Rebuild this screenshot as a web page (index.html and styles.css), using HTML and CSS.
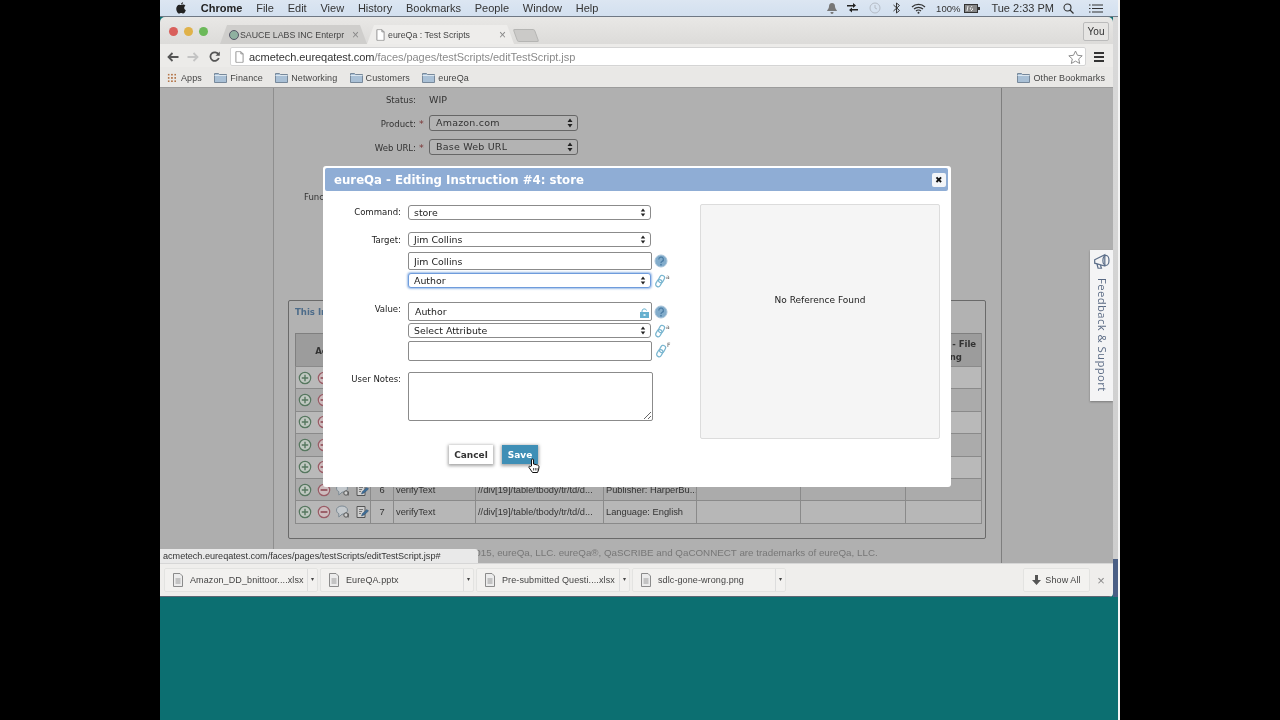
FILE: index.html
```html
<!DOCTYPE html>
<html lang="en">
<head>
    <meta charset="UTF-8">
    <title>eureQa : Test Scripts</title>
    <link rel="stylesheet" href="styles.css">
</head>
<body>
    <svg class="sprite" xmlns="http://www.w3.org/2000/svg">
        <symbol id="i-plus" viewBox="0 0 14 14"><circle cx="7" cy="7" r="5.7" fill="#c0c8c1" stroke="#56775f" stroke-width="1.2"/><path d="M7 3.800v6.400M3.800 7h6.400" stroke="#56775f" stroke-width="1.400"/></symbol>
        <symbol id="i-minus" viewBox="0 0 14 14"><circle cx="7" cy="7" r="5.7" fill="#cdbcbe" stroke="#9a5c66" stroke-width="1.200"/><path d="M3.600 7h6.800" stroke="#8a434e" stroke-width="1.500"/></symbol>
        <symbol id="i-bubble" viewBox="0 0 14 14"><path d="M6 1c3.200 0 5.500 1.700 5.500 4.100S9.200 9.200 6 9.200L2.800 12V8.600C1.300 8 .5 6.700.5 5.100.5 2.700 2.800 1 6 1z" fill="#c4c9cd" stroke="#7d8a94"/><circle cx="10" cy="10" r="2.200" fill="#d0d0d0" stroke="#555"/><path d="M12.200 8.500v4" stroke="#555"/></symbol>
        <symbol id="i-note" viewBox="0 0 14 14"><path d="M2 1.500h8v11H2z" fill="#cfcfcf" stroke="#555"/><path d="M4 4.500h4M4 6.500h3M4 8.500h2" stroke="#777"/><path d="M6.500 11l1-2.500 4.500-4 1.500 1.500-4.500 4z" fill="#3f6f99" stroke="#2d4f6e" stroke-width=".5"/></symbol>
        <symbol id="i-folder" viewBox="0 0 13 11"><path d="M.5 1.500h4l1 1h7v8H.5z" fill="#a9c0d6" stroke="#77889a"/><path d="M.5 3.500h12" stroke="#dbe6ef"/></symbol>
        <symbol id="i-doc" viewBox="0 0 10 13"><path d="M1 .5h5.500L9 3v9.500H1z" fill="#fff" stroke="#8a8a8a"/><path d="M6.500.5V3H9" fill="none" stroke="#8a8a8a"/></symbol>
        <symbol id="i-file" viewBox="0 0 12 14"><path d="M1.500.5h6.500l2.500 2.500v10.500h-9z" fill="#ececec" stroke="#8b8b8b"/><path d="M3.500 6h5M3.500 8h5M3.500 10h5" stroke="#9a9a9a"/></symbol>
        <symbol id="i-help" viewBox="0 0 14 14"><circle cx="7" cy="7" r="6" fill="#82accb" stroke="#a8c4da"/><path d="M4.800 5.400a2.300 2.200 0 1 1 3.400 1.900c-.8.500-1.200.9-1.200 1.700" fill="none" stroke="#4d7ea6" stroke-width="1.300"/><circle cx="7" cy="10.700" r=".9" fill="#4d7ea6"/></symbol>
        <symbol id="i-link" viewBox="0 0 12 14"><rect x="5" y="1" width="4.800" height="7.500" rx="2.400" transform="rotate(30 7 5)" fill="none" stroke="#7ab6d0" stroke-width="1.300"/><rect x="2.500" y="5.500" width="4.800" height="7.500" rx="2.400" transform="rotate(30 5 9)" fill="none" stroke="#7ab6d0" stroke-width="1.300"/></symbol>
        <symbol id="i-updown" viewBox="0 0 6 10"><path d="M3 .5L5.500 4H.5zM3 9.500L.5 6h5z" fill="#222"/></symbol>
    </svg>

    <div class="screen">
        <div class="menubar">
            <svg class="apple" viewBox="0 0 12 14"><path d="M8.500 0c.1 1.300-1.100 2.700-2.500 2.600C5.900 1.300 7.200.1 8.500 0zM6 3.500c.7 0 1.500-.6 2.700-.6 1 0 2 .5 2.600 1.400-2.200 1.300-1.800 4.400.5 5.300-.6 1.600-1.800 4-3.200 4-.9 0-1.200-.6-2.400-.6s-1.600.6-2.400.6C2.200 13.600.3 10.500.3 7.800.3 5 2 3 4 3c.9 0 1.400.5 2 .5z" fill="#222"/></svg>
            <span class="menu-app">Chrome</span>
            <span>File</span>
            <span>Edit</span>
            <span>View</span>
            <span>History</span>
            <span>Bookmarks</span>
            <span>People</span>
            <span>Window</span>
            <span>Help</span>
            <div class="menu-status">
                <svg width="10" height="11" viewBox="0 0 10 11"><path d="M5 0c2 0 3 1.500 3 3.500 0 2.500 2 3.500 2 4.500H0c0-1 2-2 2-4.500C2 1.500 3 0 5 0zM3.500 9h3C6.500 10 6 11 5 11S3.500 10 3.500 9z" fill="#777"/></svg>
                <svg class="ms-sync" width="13" height="12" viewBox="0 0 13 12"><path d="M1 3h6V1l3 2.500L7 6V4.500H1zM12 8.500H6v2L3 8l3-2.500V7h6z" fill="#222"/></svg>
                <svg class="ms-time" width="12" height="12" viewBox="0 0 12 12"><circle cx="6" cy="6" r="5" fill="none" stroke="#b5bcc6"/><path d="M6 3v3l2 1" fill="none" stroke="#b5bcc6"/></svg>
                <svg class="ms-bt" width="7" height="12" viewBox="0 0 7 12"><path d="M.5 3l6 5.500L3.500 11V1l3 2.500-6 5.500" fill="none" stroke="#333"/></svg>
                <svg class="ms-wifi" width="15" height="11" viewBox="0 0 15 11"><path d="M1 4c3.500-3.500 9.500-3.500 13 0M3 6c2.500-2.300 6.500-2.300 9 0M5 8c1.300-1.100 3.700-1.100 5 0" fill="none" stroke="#333" stroke-width="1.200"/><circle cx="7.500" cy="9.800" r="1" fill="#333"/></svg>
                <span class="ms-pct">100%</span>
                <svg class="ms-batt" width="16" height="9" viewBox="0 0 16 9"><rect x=".5" y=".5" width="13" height="8" fill="#888" stroke="#333"/><path d="M14 3h2v3h-2z" fill="#333"/><path d="M4 2L3 7M8 2l-2 3h3L7 7" stroke="#eee"/></svg>
                <span class="ms-time-text">Tue 2:33 PM</span>
                <svg class="ms-search" width="11" height="11" viewBox="0 0 11 11"><circle cx="4.500" cy="4.500" r="3.500" fill="none" stroke="#333" stroke-width="1.100"/><path d="M7 7l3.500 3.500" stroke="#333" stroke-width="1.300"/></svg>
                <svg class="ms-list" width="14" height="9" viewBox="0 0 14 9"><path d="M3 1h11M3 4.500h11M3 8h11" stroke="#333" stroke-width="1.200"/><path d="M0 1h1.500M0 4.500h1.500M0 8h1.500" stroke="#333" stroke-width="1.200"/></svg>
            </div>
        </div>

        <div class="desk">
            <div class="window">
                <div class="tabstrip">
                    <i class="light red"></i><i class="light amber"></i><i class="light green"></i>
                    <div class="tab tab-back">
                        <span class="fav"></span>
                        <span class="tab-title">SAUCE LABS INC Enterpr</span>
                        <span class="tab-x">×</span>
                    </div>
                    <div class="tab tab-active">
                        <svg class="tab-doc" viewBox="0 0 10 13"><use href="#i-doc"/></svg>
                        <span class="tab-title">eureQa : Test Scripts</span>
                        <span class="tab-x">×</span>
                    </div>
                    <div class="tab-new"></div>
                    <div class="you">You</div>
                </div>

                <div class="toolbar">
                    <svg class="nav" width="12" height="10" viewBox="0 0 12 10"><path d="M11.500 5H2M5.500 1L1.500 5l4 4" fill="none" stroke="#555" stroke-width="1.800"/></svg>
                    <svg class="nav nav-fwd" width="12" height="10" viewBox="0 0 12 10"><path d="M.5 5H10M6.500 1l4 4-4 4" fill="none" stroke="#c4c4c4" stroke-width="1.800"/></svg>
                    <svg class="nav nav-reload" width="11" height="11" viewBox="0 0 11 11"><path d="M9.500 3.500A4.300 4.300 0 1 0 9.800 7" fill="none" stroke="#555" stroke-width="1.800"/><path d="M10.800 .5v4.300H6.500z" fill="#555"/></svg>
                    <div class="omnibox">
                        <svg class="omni-doc" viewBox="0 0 10 13"><use href="#i-doc"/></svg>
                        <span class="url"><b>acmetech.eureqatest.com</b>/faces/pages/testScripts/editTestScript.jsp</span>
                        <svg class="star" width="15" height="14" viewBox="0 0 15 14"><path d="M7.500 1l2 4.300 4.700.5-3.500 3.100 1 4.600-4.200-2.400-4.200 2.400 1-4.600L.8 5.800l4.700-.5z" fill="#fff" stroke="#8d8d8d"/></svg>
                    </div>
                    <div class="burger"><i></i><i></i><i></i></div>
                </div>

                <div class="bookmarks">
                    <div class="bm bm-apps"><span class="apps-grid"></span>Apps</div>
                    <div class="bm"><svg class="bm-icon"><use href="#i-folder"/></svg>Finance</div>
                    <div class="bm"><svg class="bm-icon"><use href="#i-folder"/></svg>Networking</div>
                    <div class="bm"><svg class="bm-icon"><use href="#i-folder"/></svg>Customers</div>
                    <div class="bm"><svg class="bm-icon"><use href="#i-folder"/></svg>eureQa</div>
                    <div class="bm bm-other"><svg class="bm-icon"><use href="#i-folder"/></svg>Other Bookmarks</div>
                </div>

                <div class="page">
                    <div class="side-left"></div>
                    <div class="main">
                        <div class="script-form">
                            <div class="sf-row sf-first"><label>Status:</label><span class="sf-value">WIP</span></div>
                            <div class="sf-row"><label>Product:</label><em>*</em><div class="sf-select">Amazon.com<svg class="updown"><use href="#i-updown"/></svg></div></div>
                            <div class="sf-row"><label>Web URL:</label><em>*</em><div class="sf-select">Base Web URL<svg class="updown"><use href="#i-updown"/></svg></div></div>
                            <div class="sf-row sf-tight"><label></label><em></em><div class="sf-select"></div></div>
                            <div class="sf-func">Func</div>
                        </div>

                        <div class="instructions">
                            <div class="inst-title">This Instruction</div>
                            <table class="steps">
                                <colgroup>
                                    <col class="c-act"><col class="c-num"><col class="c-cmd"><col class="c-tgt"><col class="c-val"><col class="c-x1"><col class="c-x2"><col class="c-x3">
                                </colgroup>
                                <thead>
                                    <tr><th>Actions</th><th></th><th></th><th></th><th></th><th></th><th></th><th>Capture - File<br>Naming</th></tr>
                                </thead>
                                <tbody>
                                    <tr><td class="acts"><svg><use href="#i-plus"/></svg><svg><use href="#i-minus"/></svg><svg><use href="#i-bubble"/></svg><svg><use href="#i-note"/></svg></td><td></td><td></td><td></td><td></td><td></td><td></td><td></td></tr>
                                    <tr><td class="acts"><svg><use href="#i-plus"/></svg><svg><use href="#i-minus"/></svg><svg><use href="#i-bubble"/></svg><svg><use href="#i-note"/></svg></td><td></td><td></td><td></td><td></td><td></td><td></td><td></td></tr>
                                    <tr><td class="acts"><svg><use href="#i-plus"/></svg><svg><use href="#i-minus"/></svg><svg><use href="#i-bubble"/></svg><svg><use href="#i-note"/></svg></td><td></td><td></td><td></td><td></td><td></td><td></td><td></td></tr>
                                    <tr><td class="acts"><svg><use href="#i-plus"/></svg><svg><use href="#i-minus"/></svg><svg><use href="#i-bubble"/></svg><svg><use href="#i-note"/></svg></td><td></td><td></td><td></td><td></td><td></td><td></td><td></td></tr>
                                    <tr><td class="acts"><svg><use href="#i-plus"/></svg><svg><use href="#i-minus"/></svg><svg><use href="#i-bubble"/></svg><svg><use href="#i-note"/></svg></td><td></td><td></td><td></td><td></td><td></td><td></td><td></td></tr>
                                    <tr><td class="acts"><svg><use href="#i-plus"/></svg><svg><use href="#i-minus"/></svg><svg><use href="#i-bubble"/></svg><svg><use href="#i-note"/></svg></td><td class="num">6</td><td>verifyText</td><td>//div[19]/table/tbody/tr/td/d...</td><td>Publisher: HarperBu...</td><td></td><td></td><td></td></tr>
                                    <tr><td class="acts"><svg><use href="#i-plus"/></svg><svg><use href="#i-minus"/></svg><svg><use href="#i-bubble"/></svg><svg><use href="#i-note"/></svg></td><td class="num">7</td><td>verifyText</td><td>//div[19]/table/tbody/tr/td/d...</td><td>Language: English</td><td></td><td></td><td></td></tr>
                                </tbody>
                            </table>
                        </div>

                        <div class="copyright">Copyright © 2015, eureQa, LLC. eureQa®, QaSCRIBE and QaCONNECT are trademarks of eureQa, LLC.</div>
                    </div>
                    <div class="side-right"></div>

                    <div class="status-bubble">acmetech.eureqatest.com/faces/pages/testScripts/editTestScript.jsp#</div>

                    <div class="feedback">
                        <svg class="feedback-icon" width="18" height="17" viewBox="0 0 16 15"><path d="M1.500 6l9-4.500v10L1.500 9zM3.500 9.500l1 4h3L6.500 10.500" fill="none" stroke="#5d6f8a" stroke-width="1.100"/><ellipse cx="11.500" cy="6.500" rx="2.700" ry="4.500" fill="none" stroke="#5d6f8a" stroke-width="1.100"/></svg>
                        <span class="feedback-text">Feedback &amp; Support</span>
                    </div>
                </div>

                <div class="downloads">
                    <div class="dl"><svg class="dl-icon"><use href="#i-file"/></svg><span class="dl-name">Amazon_DD_bnittoor....xlsx</span><span class="dl-more">▾</span></div>
                    <div class="dl"><svg class="dl-icon"><use href="#i-file"/></svg><span class="dl-name">EureQA.pptx</span><span class="dl-more">▾</span></div>
                    <div class="dl"><svg class="dl-icon"><use href="#i-file"/></svg><span class="dl-name">Pre-submitted Questi....xlsx</span><span class="dl-more">▾</span></div>
                    <div class="dl"><svg class="dl-icon"><use href="#i-file"/></svg><span class="dl-name">sdlc-gone-wrong.png</span><span class="dl-more">▾</span></div>
                    <div class="show-all"><svg width="9" height="10" viewBox="0 0 9 10"><path d="M3 0h3v5h3L4.500 10 0 5h3z" fill="#555"/></svg>Show All</div>
                    <span class="dl-close">×</span>
                </div>
            </div>
            <div class="edge"></div>
        </div>

        <div class="teal"></div>

        <div class="modal">
            <div class="modal-title">
                <span>eureQa - Editing Instruction #4: store</span>
                <button class="modal-close">✖</button>
            </div>
            <div class="modal-body">
                <div class="modal-form">
                    <div class="field f-command">
                        <label>Command:</label>
                        <div class="ctrls">
                            <div class="select">store<svg class="updown"><use href="#i-updown"/></svg></div>
                        </div>
                    </div>
                    <div class="field f-target">
                        <label>Target:</label>
                        <div class="ctrls">
                            <div class="select">Jim Collins<svg class="updown"><use href="#i-updown"/></svg></div>
                            <div class="line l-input"><input class="text" value="Jim Collins"><svg class="help"><use href="#i-help"/></svg></div>
                            <div class="line l-author"><div class="select focused">Author<svg class="updown"><use href="#i-updown"/></svg></div><svg class="chain"><use href="#i-link"/></svg><sup>a</sup></div>
                        </div>
                    </div>
                    <div class="field f-value">
                        <label>Value:</label>
                        <div class="ctrls">
                            <div class="line">
                                <input class="text text-tall" value="Author">
                                <svg class="lock" width="9" height="10" viewBox="0 0 9 10"><path d="M2 4.500V3a2.300 2.300 0 0 1 4.500-.5" fill="none" stroke="#66b0cf"/><rect y="4" width="9" height="6" fill="#66b0cf"/><rect x="3.500" y="6" width="2" height="2" fill="#d8eef6"/></svg>
                                <svg class="help"><use href="#i-help"/></svg>
                            </div>
                            <div class="line l-attr"><div class="select">Select Attribute<svg class="updown"><use href="#i-updown"/></svg></div><svg class="chain"><use href="#i-link"/></svg><sup>a</sup></div>
                            <div class="line l-last"><input class="text text-last"><svg class="chain"><use href="#i-link"/></svg><sup>F</sup></div>
                        </div>
                    </div>
                    <div class="field f-notes">
                        <label>User Notes:</label>
                        <div class="ctrls"><textarea class="notes"></textarea></div>
                    </div>
                    <div class="actions">
                        <button class="btn">Cancel</button>
                        <button class="btn btn-save">Save</button>
                    </div>
                </div>
                <div class="reference">No Reference Found</div>
            </div>
            <svg class="hand" width="12" height="15" viewBox="0 0 12 15"><path d="M3.500 8V2a1 1 0 0 1 2 0v4l4 1c1 .3 1.500 1 1.500 2l-.5 3-1 2.500H4.500L1 9.500c-.5-1 .8-1.800 1.500-1z" fill="#fff" stroke="#111"/><path d="M5.500 10v2.500M7.300 10v2.500M9 10v2.500" stroke="#111" stroke-width=".7"/></svg>
        </div>
    </div>
</body>
</html>
```

FILE: styles.css
```css
* { box-sizing: border-box; }
body { margin: 0; background: #000; font-family: "Liberation Sans", Arial, sans-serif; }

.sprite { position: absolute; width: 0; height: 0; }

.screen {
    position: relative;
    width: 960px;
    height: 720px;
    margin: 0 auto;
    display: flex;
    flex-direction: column;
    background: #0c6f71;
    border-right: 2px solid #f4f4f4;
    overflow: hidden;
    filter: blur(0.35px);
}

/* mac menu bar */
.menubar {
    height: 17px;
    flex: none;
    display: flex;
    align-items: center;
    gap: 13.800px;
    padding-left: 16px;
    background: linear-gradient(#dce6f2, #d3e0ef);
    border-bottom: 1px solid #6f7884;
    font-size: 11px;
    color: #333;
}
.apple { width: 10px; height: 12px; margin-right: 1px; }
.menu-app { font-weight: bold; color: #222; }
.menu-status { margin-left: auto; display: flex; align-items: center; padding-right: 15px; font-size: 10.500px; }
.ms-sync { margin-left: 9px; }
.ms-time { margin-left: 10px; }
.ms-bt { margin-left: 12px; }
.ms-wifi { margin-left: 11px; }
.ms-pct { margin-left: 10px; font-size: 9.500px; }
.ms-batt { margin-left: 4px; }
.ms-time-text { margin-left: 11px; font-size: 11px; }
.ms-search { margin-left: 9px; }
.ms-list { margin-left: 15px; }

.desk { height: 580px; flex: none; display: flex; }
.window { width: 953px; display: flex; flex-direction: column; border-radius: 5px 5px 4px 0; overflow: hidden; }
.edge { flex: 1; background: linear-gradient(#d9d9d9 0, #cdcdcd 93.500%, #4a5f85 93.500%, #4a5f85 100%); }
.teal { flex: 1; }

/* tabs */
.tabstrip {
    height: 27px;
    flex: none;
    display: flex;
    align-items: flex-end;
    padding-left: 9px;
    background: linear-gradient(#e9e8e6, #dcdbd9);
    position: relative;
}
.light { width: 9px; height: 9px; border-radius: 50%; margin: 0 6px 8px 0; }
.red { background: #d9605c; }
.amber { background: #e0b24a; }
.green { background: #6cb95a; }
.tab {
    width: 147px;
    height: 19px;
    display: flex;
    align-items: center;
    padding: 0 8px 0 9px;
    font-size: 8.800px;
    color: #444;
    clip-path: polygon(0 100%, 7px 0, 140px 0, 100% 100%);
}
.tab-back { margin-left: 6px; background: #cfcecc; }
.tab-active { background: #eeedeb; }
.fav { width: 10px; height: 10px; border-radius: 50%; background: #8fb0a0; border: 1.500px solid #556; flex: none; margin-right: 1px; }
.tab-doc { width: 9px; height: 12px; flex: none; margin-right: 3px; }
.tab-title { flex: 1; overflow: hidden; white-space: nowrap; }
.tab-x { font-size: 12px; color: #888; margin-left: 5px; }
.tab-new { width: 22px; height: 13px; margin: 0 0 2px 1px; background: #cbcac8; border: 1px solid #b5b5b3; border-radius: 2px; transform: skewX(20deg); }
.you {
    position: absolute;
    right: 4px;
    top: 5px;
    width: 26px;
    height: 19px;
    border: 1px solid #bbb;
    border-radius: 2px;
    background: #e6e5e3;
    text-align: center;
    font-size: 10px;
    line-height: 17px;
    color: #333;
}

/* toolbar */
.toolbar { height: 23px; flex: none; display: flex; align-items: center; padding: 2px 0 0 7px; background: #ecebe9; }
.nav-fwd { margin-left: 8px; }
.nav-reload { margin-left: 10px; }
.omnibox {
    width: 856px;
    height: 19px;
    margin-left: 10px;
    display: flex;
    align-items: center;
    background: #fff;
    border: 1px solid #d4d4d4;
    border-radius: 2px;
    padding-left: 4px;
}
.omni-doc { width: 9px; height: 12px; flex: none; }
.url { margin-left: 5px; font-size: 11px; letter-spacing: -0.05px; color: #8a8a8a; white-space: nowrap; }
.url b { font-weight: normal; color: #333; }
.star { margin-left: auto; margin-right: 2px; }
.burger { margin-left: 8px; width: 10px; display: flex; flex-direction: column; gap: 2px; }
.burger i { height: 2px; background: #333; }

/* bookmarks */
.bookmarks {
    height: 21px;
    flex: none;
    display: flex;
    align-items: center;
    padding: 1px 8px 0 7px;
    gap: 12.300px;
    background: #e9e8e6;
    border-bottom: 1px solid #9c9c9c;
    font-size: 9px;
    color: #444;
    letter-spacing: 0.1px;
}
.bm { display: flex; align-items: center; gap: 3px; white-space: nowrap; }
.bm-icon { width: 13px; height: 11px; }
.bm-other { margin-left: auto; }
.apps-grid {
    width: 10px;
    height: 10px;
    margin-right: 1px;
    background: radial-gradient(circle, #b5764a 1px, transparent 1.300px) 0 0 / 3.300px 3.300px;
}

/* page behind the dialog, already dimmed */
.page { position: relative; flex: 1; display: flex; background: #aeaeae; color: #333; font-family: "DejaVu Sans", sans-serif; font-size: 9.500px; min-height: 0; }
.side-left { width: 113px; flex: none; }
.side-right { flex: 1; }
.main { width: 729px; flex: none; border-left: 1px solid #8e8e8e; border-right: 1px solid #7f7f7f; background: #b0b0b0; }
.script-form { height: 212px; position: relative; overflow: hidden; }
.sf-row { display: flex; align-items: center; height: 24px; }
.sf-first { height: 23px; }
.sf-row label { width: 142px; text-align: right; font-family: "DejaVu Sans Condensed", "DejaVu Sans", sans-serif; }
.sf-row em { width: 13px; padding-left: 3px; color: #7a3535; font-style: normal; flex: none; }
.sf-value { margin-left: 13px; }
.sf-select {
    position: relative;
    width: 149px;
    height: 16px;
    padding-left: 6px;
    border: 1px solid #666;
    border-radius: 3px;
    line-height: 14px;
    letter-spacing: 0.2px;
    background: #b3b3b3;
}
.sf-tight { margin-top: 6px; }
.sf-func { position: absolute; left: 30px; top: 103px; font-family: "DejaVu Sans Condensed", "DejaVu Sans", sans-serif; }
.updown { position: absolute; right: 4px; top: 2px; width: 6px; height: 10px; }

.instructions {
    width: 698px;
    height: 239px;
    margin-left: 14px;
    padding-left: 6px;
    background: #b2b2b2;
    border: 1px solid #6a6a6a;
    border-radius: 2px;
}
.inst-title { height: 32px; padding-top: 5px; font-weight: bold; color: #4d6c8a; font-family: "DejaVu Sans Condensed", "DejaVu Sans", sans-serif; }
.steps { width: 686px; table-layout: fixed; border-collapse: collapse; border: 1px solid #7f7f7f; }
.c-act { width: 75px; }
.c-num { width: 23px; }
.c-cmd { width: 82px; }
.c-tgt { width: 128px; }
.c-val { width: 93px; }
.c-x1 { width: 104px; }
.c-x2 { width: 105px; }
.c-x3 { width: 76px; }
.steps th { height: 33px; padding: 0; background: #9c9c9c; font-family: "DejaVu Sans Condensed", "DejaVu Sans", sans-serif; font-weight: bold; line-height: 13px; border-right: 1px solid #8a8a8a; }
.steps td { height: 22.400px; padding: 0 0 0 2px; border: 1px solid #8a8a8a; white-space: nowrap; overflow: hidden; font-family: "Liberation Sans", sans-serif; font-size: 9.300px; }
.steps tbody tr:nth-child(odd) td { background: #b9b9b9; }
.steps tbody tr:nth-child(even) td { background: #ababab; }
.steps tbody tr:last-child td { background: #b7b7b7; }
.steps td.num { padding: 0; text-align: center; }
.acts svg { width: 14px; height: 14px; margin-right: 5px; vertical-align: middle; }
.steps td.acts { padding-left: 2px; }

.copyright { margin-top: 8px; padding-left: 18px; text-align: center; font-family: "Liberation Sans", sans-serif; font-size: 9.800px; color: #777; white-space: nowrap; }

.status-bubble {
    position: absolute;
    left: 0;
    bottom: 0;
    width: 318px;
    height: 14px;
    padding-left: 3px;
    background: #e9e9e9;
    border-radius: 0 3px 0 0;
    font-family: "Liberation Sans", sans-serif;
    font-size: 9.100px;
    line-height: 14px;
    color: #333;
}

.feedback {
    position: absolute;
    left: 930px;
    top: 162px;
    width: 23px;
    height: 151px;
    display: flex;
    flex-direction: column;
    align-items: center;
    background: #f4f4f5;
    box-shadow: 0 1px 2px rgba(0, 0, 0, .3);
}
.feedback-icon { margin-top: 3px; flex: none; }
.feedback-text {
    margin-top: 8px;
    padding-left: 1px;
    writing-mode: vertical-rl;
    font-family: "Open Sans", sans-serif;
    font-size: 11.300px;
    letter-spacing: .4px;
    color: #5a6a84;
    white-space: nowrap;
}

/* downloads bar */
.downloads {
    height: 34px;
    flex: none;
    display: flex;
    align-items: center;
    gap: 2px;
    padding-left: 4px;
    background: #efeeec;
    border-top: 1px solid #d6d6d6;
    border-bottom: 1px solid #5d6673;
    font-size: 9px;
    color: #444;
    letter-spacing: 0.1px;
}
.dl {
    width: 154px;
    height: 24px;
    display: flex;
    align-items: center;
    padding-left: 7px;
    background: #f2f1ef;
    border: 1px solid #e3e3e1;
    border-radius: 2px;
}
.dl-icon { width: 12px; height: 14px; flex: none; }
.dl-name { margin-left: 6px; flex: 1; white-space: nowrap; overflow: hidden; }
.dl-more { width: 10px; height: 22px; border-left: 1px solid #ddd; font-size: 6px; line-height: 20px; text-align: center; flex: none; }
.show-all {
    margin-left: auto;
    width: 67px;
    height: 24px;
    display: flex;
    align-items: center;
    justify-content: center;
    gap: 4px;
    background: #f3f2f0;
    border: 1px solid #e3e3e1;
    border-radius: 2px;
}
.dl-close { width: 21px; padding-right: 3px; text-align: center; font-size: 13px; color: #888; }

/* dialog */
.modal {
    position: absolute;
    left: 163px;
    top: 166px;
    width: 628px;
    height: 321px;
    padding: 2px 3px 0 2px;
    background: #fff;
    border-radius: 3px;
    color: #222;
    font-family: "DejaVu Sans", sans-serif;
    font-size: 9.400px;
}
.modal-title {
    height: 23px;
    display: flex;
    align-items: center;
    justify-content: space-between;
    padding: 0 2px 0 9px;
    background: #8fadd5;
    border-radius: 2px;
    color: #fff;
    font-size: 11.750px;
    font-weight: bold;
}
.modal-close {
    width: 14px;
    height: 14px;
    padding: 0;
    border: none;
    border-radius: 2px;
    background: #f3f5f8;
    color: #111;
    font-size: 9px;
    line-height: 14px;
}
.modal-body { display: flex; }
.modal-form { width: 375px; padding-top: 14px; }
.field { display: flex; }
.field label { width: 76px; flex: none; text-align: right; padding-top: 1px; font-family: "DejaVu Sans Condensed", "DejaVu Sans", sans-serif; font-size: 9.500px; }
.ctrls { width: 262px; margin-left: 7px; }
.f-target { margin-top: 12px; }
.f-target label { padding-top: 2px; }
.f-value { margin-top: 14px; }
.f-value label { padding-top: 1px; }
.f-notes { margin-top: 11px; }
.f-notes label { padding-top: 1px; }

.select {
    position: relative;
    width: 243px;
    height: 15px;
    padding-left: 5px;
    background: #fff;
    border: 1px solid #8b8b8b;
    border-radius: 3px;
    line-height: 13px;
    flex: none;
}
.select .updown { top: 2px; height: 9px; }
.select.focused { border-color: #6f9cdc; box-shadow: 0 0 2px 1px #9dbde8; }
.line { position: relative; display: flex; align-items: center; height: 18px; margin-top: 3px; }
.line sup { font-size: 6px; color: #555; align-self: flex-start; line-height: 8px; }
.l-input { margin-top: 5px; }
.l-author { height: 15px; }
.f-value .line:first-child { margin-top: 0; height: 19px; }
.l-attr { margin-top: 2px; height: 15px; }
.l-last { margin-top: 3px; height: 20px; }
.text {
    width: 244px;
    height: 18px;
    padding: 0 0 0 5px;
    border: 1px solid #8b8b8b;
    border-radius: 2px;
    outline: none;
    font: inherit;
    color: #222;
    background: #fff;
    flex: none;
}
.text-tall { height: 19px; padding-left: 6px; }
.text-last { height: 20px; }
.lock { position: absolute; left: 232px; top: 6px; }
.help { width: 14px; height: 14px; margin-left: 2px; flex: none; }
.chain { width: 12px; height: 14px; margin-left: 3px; flex: none; }
.notes { display: block; width: 245px; height: 49px; border: 1px solid #8b8b8b; border-radius: 2px; outline: none; margin: 0; }

.actions { display: flex; gap: 9px; margin-top: 24px; padding-left: 124px; }
.btn {
    width: 44px;
    height: 19px;
    padding: 0;
    border: none;
    background: #fff;
    color: #333;
    font: bold 9px "DejaVu Sans", sans-serif;
    box-shadow: 0 1px 3px 1px rgba(0, 0, 0, .35);
}
.btn-save { width: 36px; background: #3f8fb6; color: #fff; }

.reference {
    width: 240px;
    height: 235px;
    margin-top: 13px;
    padding-top: 90px;
    text-align: center;
    font-size: 9px;
    background: #f5f5f5;
    border: 1px solid #dcdcdc;
    border-radius: 2px;
}
.hand { position: absolute; left: 205px; top: 292px; }
```
